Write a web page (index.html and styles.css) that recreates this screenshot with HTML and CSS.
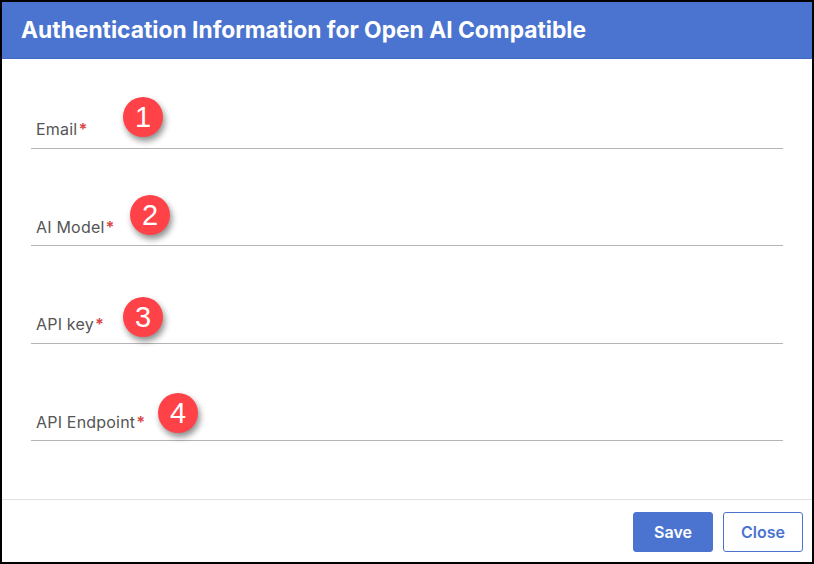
FILE: index.html
```html
<!DOCTYPE html>
<html lang="en">
<head>
<meta charset="utf-8">
<title>Authentication Information</title>
<link rel="stylesheet" href="styles.css">
</head>
<body>
<div class="dialog">
  <header class="dialog-header"><h1 class="dialog-title">Authentication Information for Open AI Compatible</h1></header>
  <main class="dialog-body">
    <div class="field"><span class="field-label">Email<span class="req">*</span></span><span class="badge badge-1">1</span></div>
    <div class="field"><span class="field-label">AI Model<span class="req">*</span></span><span class="badge badge-2">2</span></div>
    <div class="field"><span class="field-label">API key<span class="req">*</span></span><span class="badge badge-3">3</span></div>
    <div class="field"><span class="field-label">API Endpoint<span class="req">*</span></span><span class="badge badge-4">4</span></div>
  </main>
  <footer class="dialog-footer">
    <button class="btn btn-primary" type="button">Save</button>
    <button class="btn btn-outline" type="button">Close</button>
  </footer>
</div>
</body>
</html>
```
FILE: styles.css
```css
* { box-sizing: border-box; }
html, body { margin: 0; padding: 0; }
body { width: 814px; height: 564px; background: #fff; font-family: Inter, "Liberation Sans", sans-serif; overflow: hidden; }
.dialog { width: 814px; height: 564px; border: 2px solid #000; display: flex; flex-direction: column; background: #fff; }
.dialog-header { height: 57px; background: #4a74cf; border-bottom: 1px solid #426bc0; display: flex; align-items: center; padding: 0 19px; flex: none; }
.dialog-title { margin: 0; color: #fff; font-size: 22.8px; font-weight: 700; line-height: 1; letter-spacing: 0; }
.dialog-body { flex: 1; padding: 0 29px 0 29px; display: flex; flex-direction: column; }
.field { position: relative; height: 97.4px; border-bottom: 1px solid #b4b4b4; flex: none; display: flex; align-items: flex-end; padding: 0 0 9.6px 5px; }
.field:first-child { height: 90px; }
.field-label { font-size: 16px; line-height: 17px; color: #555; letter-spacing: 0.2px; }
.req { color: #d84848; margin-left: 1px; font-weight: 700; }
.badge { position: absolute; width: 40px; height: 40px; border-radius: 50%; background: #ff4248; color: #fff; font-family: "Liberation Sans", Arial, sans-serif; font-size: 29px; line-height: 40px; text-align: center; letter-spacing: 0; box-shadow: 2px 4px 6px rgba(0,0,0,.45); }
.badge-1 { left: 92px; top: 38px; }
.badge-2 { left: 99px; top: 46px; }
.badge-3 { left: 92px; top: 50.6px; }
.badge-4 { left: 127px; top: 49.2px; }
.dialog-footer { flex: none; height: 63px; border-top: 1px solid #e0e0e0; display: flex; justify-content: flex-end; align-items: flex-start; gap: 10px; padding: 12px 9px 0 0; }
.btn { width: 80px; height: 40px; border-radius: 3px; font-family: Inter, "Liberation Sans", sans-serif; font-size: 16px; font-weight: 600; padding: 0; }
.btn-primary { background: #4a74cf; border: 1px solid #4a74cf; color: #fff; }
.btn-outline { background: #fff; border: 1px solid #4a74cf; color: #4a74cf; }
```
